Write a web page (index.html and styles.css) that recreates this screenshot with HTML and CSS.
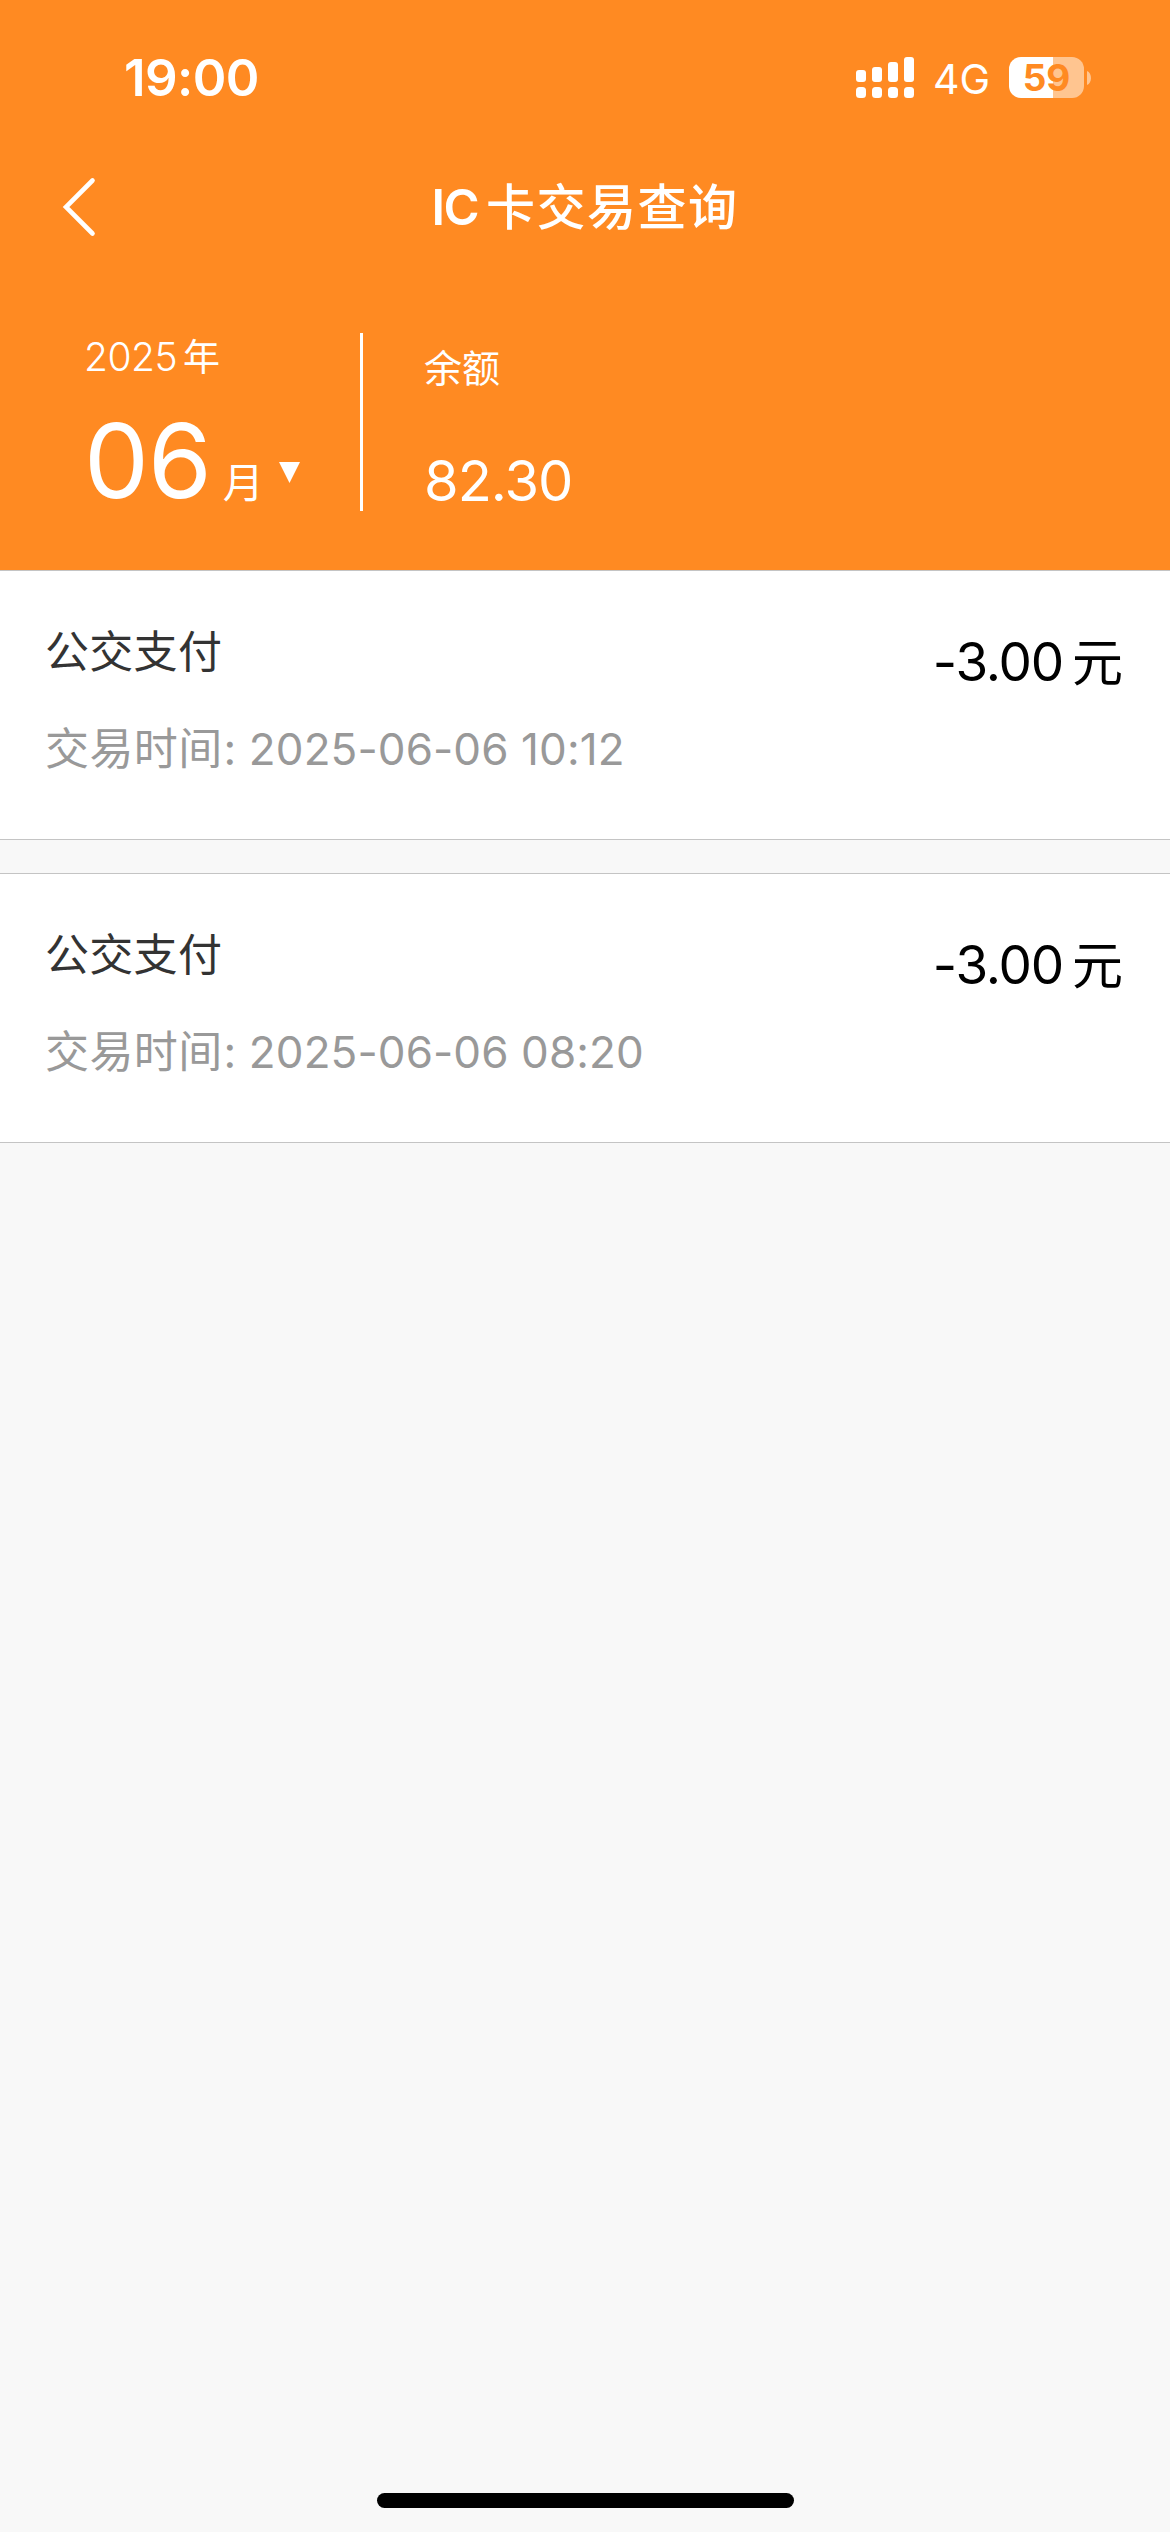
FILE: index.html
```html
<!DOCTYPE html>
<html lang="zh-CN">
<head>
<meta charset="utf-8">
<title>IC卡交易查询</title>
<link rel="stylesheet" href="styles.css">
</head>
<body>
<div class="screen">
  <header class="header">
    <div class="status-bar">
      <span class="clock">19:00</span>
      <div class="status-right">
        <svg class="signal" width="58" height="41" viewBox="0 0 58 41" fill="#fff">
          <rect x="0" y="13" width="10" height="12" rx="3"/>
          <rect x="16" y="10" width="10" height="15" rx="3"/>
          <rect x="32" y="5" width="10" height="20" rx="3"/>
          <rect x="48" y="0" width="10" height="25" rx="3"/>
          <rect x="0" y="30" width="10" height="11" rx="3.5"/>
          <rect x="16" y="30" width="10" height="11" rx="3.5"/>
          <rect x="32" y="30" width="10" height="11" rx="3.5"/>
          <rect x="48" y="30" width="10" height="11" rx="3.5"/>
        </svg>
        <span class="network">4G</span>
        <div class="battery"><span class="battery-level">59</span></div>
        <svg class="battery-nub" width="4" height="14" viewBox="0 0 4 14"><path d="M0 0C5.3 2 5.3 12 0 14Z" fill="#fff" fill-opacity=".5"/></svg>
      </div>
    </div>
    <nav class="nav">
      <svg class="back" width="34" height="60" viewBox="0 0 34 60" fill="none" stroke="#fff" stroke-width="4.6" stroke-linecap="round"><path d="M30.5 3.5L4 30L30.5 56.5"/></svg>
      <h1 class="title"><span class="title-latin">IC</span>卡交易查询</h1>
    </nav>
    <section class="summary">
      <div class="period">
        <div class="year"><span class="year-number">2025</span>年</div>
        <div class="month">
          <span class="month-number">06</span><span class="month-unit">月</span>
          <svg class="caret" width="21" height="21" viewBox="0 0 21 21"><path d="M0 0H21L10.5 21Z" fill="#fff"/></svg>
        </div>
      </div>
      <div class="balance">
        <div class="balance-label">余额</div>
        <div class="balance-value">82.30</div>
      </div>
    </section>
  </header>
  <main class="list">
    <article class="record">
      <div class="record-info">
        <div class="record-title">公交支付</div>
        <div class="record-time"><span class="time-label">交易时间</span>: 2025-06-06 10:12</div>
      </div>
      <div class="amount"><span class="amount-number">-3.00</span>元</div>
    </article>
    <article class="record">
      <div class="record-info">
        <div class="record-title">公交支付</div>
        <div class="record-time"><span class="time-label">交易时间</span>: 2025-06-06 08:20</div>
      </div>
      <div class="amount"><span class="amount-number">-3.00</span>元</div>
    </article>
  </main>
  <div class="home-indicator"></div>
</div>
</body>
</html>
```
FILE: styles.css
```css
* { box-sizing: border-box; }
body {
  margin: 0;
  font-family: Inter, "Noto Sans CJK SC", sans-serif;
  background: #f8f8f8;
}
.screen {
  display: flex;
  flex-direction: column;
  width: 1170px;
  height: 2532px;
  background: #f8f8f8;
}
.header {
  height: 570px;
  background: #ff8a22;
  color: #fff;
}
.status-bar {
  display: flex;
  align-items: center;
  justify-content: space-between;
  height: 155px;
  padding: 0 79px 0 124px;
}
.clock {
  font-size: 51px;
  font-weight: 600;
  line-height: 60px;
  letter-spacing: -0.6px;
}
.status-right {
  display: flex;
  align-items: center;
}
.network {
  margin-left: 19px;
  width: 76px;
  font-size: 41px;
  line-height: 44px;
  padding-top: 3px;
}
.battery {
  width: 75px;
  height: 41px;
  border-radius: 12px;
  background: linear-gradient(to right, #fff 44px, #ffc590 44px);
  text-align: center;
}
.battery-level {
  display: block;
  font-size: 37px;
  font-weight: 700;
  line-height: 42px;
  color: #ff8a22;
}
.battery-nub { margin-left: 3px; }
.nav {
  display: flex;
  align-items: center;
  height: 104px;
  padding-left: 62px;
}
.title {
  flex: 1;
  margin: 0 96px 0 0;
  padding-top: 1px;
  text-align: center;
  font-size: 49px;
  font-weight: 500;
  line-height: 70px;
  letter-spacing: 1.5px;
}
.title-latin {
  font-weight: 600;
  letter-spacing: -1.5px;
  margin-right: 8px;
}
.summary {
  display: flex;
  height: 311px;
  padding: 74px 0 59px 84px;
}
.period {
  width: 279px;
  border-right: 3px solid #fff;
}
.year {
  padding-top: 1px;
  font-size: 37px;
  line-height: 46px;
}
.year-number {
  font-size: 39px;
  font-weight: 350;
  letter-spacing: -0.5px;
  margin-right: 6px;
}
.month {
  display: flex;
  align-items: baseline;
  margin-top: 20px;
  line-height: 120px;
}
.month-number { font-size: 103px; letter-spacing: -1px; }
.month-unit { font-size: 41px; margin-left: 12px; }
.caret { margin-left: 15px; align-self: center; margin-top: 1px; }
.balance { padding-left: 61px; }
.balance-label {
  font-size: 38px;
  line-height: 50px;
  padding-top: 10px;
}
.balance-value {
  font-size: 56px;
  line-height: 70px;
  margin-top: 53px;
  letter-spacing: -1px;
}
.list {
  display: flex;
  flex-direction: column;
  gap: 33px;
  flex: 1;
}
.record {
  display: flex;
  justify-content: space-between;
  height: 270px;
  padding: 51px 47px 0 45px;
  border-top: 1px solid #c4c4c4;
  border-bottom: 1px solid #c4c4c4;
  background: #fff;
}
.record-title {
  font-size: 44px;
  line-height: 60px;
  letter-spacing: 0.3px;
  color: #333;
}
.record-time {
  margin-top: 37px;
  font-size: 44px;
  line-height: 60px;
  letter-spacing: 0.1px;
  color: #999;
}
.time-label {
  letter-spacing: 0.4px;
  margin-right: 1px;
}
.amount {
  font-size: 51px;
  line-height: 80px;
  color: #000;
}
.amount-number { font-size: 53px; margin-right: 9px; letter-spacing: -1.2px; }
.home-indicator {
  align-self: center;
  width: 417px;
  height: 15px;
  margin-bottom: 24px;
  border-radius: 8px;
  background: #000;
}
```
